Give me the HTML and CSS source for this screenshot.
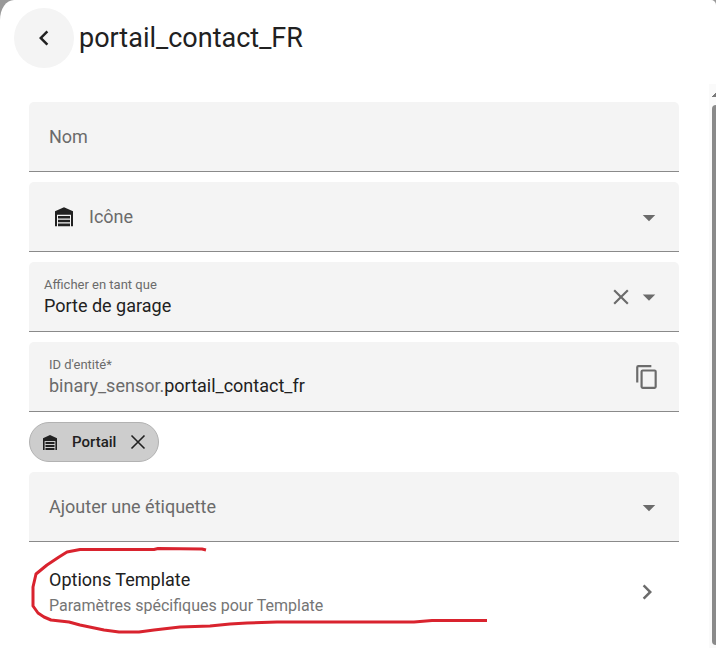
FILE: index.html
```html
<!DOCTYPE html>
<html lang="fr">
<head>
    <meta charset="UTF-8">
    <meta name="viewport" content="width=device-width, initial-scale=1.0">
    <title>portail_contact_FR</title>
    <link rel="stylesheet" href="styles.css">
</head>
<body>
    <div class="dialog">
        <header class="header">
            <button class="back" type="button" aria-label="Retour">
                <svg class="icon-l" viewBox="0 0 24 24"><path d="M15.41,16.58L10.83,12L15.41,7.41L14,6L8,12L14,18L15.41,16.58Z"/></svg>
            </button>
            <h1>portail_contact_FR</h1>
        </header>

        <div class="body">
            <form class="form">
                <div class="field">
                    <label class="label" for="name">Nom</label>
                    <input class="control" type="text" id="name">
                </div>

                <div class="field">
                    <svg class="icon-l dark" viewBox="0 0 24 24"><path d="M4.800,19.400V7.400L12,4.200L19.200,7.400V19.400H17.600V10.200H6.400V19.400ZM7.200,11.200H16.800V13.200H7.200ZM7.200,14.200H16.800V16.200H7.200ZM7.200,17.200H16.800V19.400H7.200Z"/></svg>
                    <label class="label" for="icon">Icône</label>
                    <select class="control" id="icon">
                        <option value=""></option>
                    </select>
                    <svg class="icon-l" viewBox="0 0 24 24"><path d="M7,10.400L12,15.400L17,10.400H7Z"/></svg>
                </div>

                <div class="field field-tight">
                    <div class="stack">
                        <label class="small-label" for="show-as">Afficher en tant que</label>
                        <select class="control" id="show-as">
                            <option selected>Porte de garage</option>
                        </select>
                    </div>
                    <button class="icon-btn" type="button" aria-label="Effacer">
                        <svg class="icon-m" viewBox="0 0 24 24"><path d="M19,6.41L17.59,5L12,10.59L6.41,5L5,6.41L10.59,12L5,17.59L6.41,19L12,13.41L17.59,19L19,17.59L13.41,12L19,6.41Z"/></svg>
                    </button>
                    <svg class="icon-l" viewBox="0 0 24 24"><path d="M7,10L12,15L17,10H7Z"/></svg>
                </div>

                <div class="field">
                    <div class="stack">
                        <label class="small-label" for="entity-id">ID d'entité*</label>
                        <div class="prefixed">
                            <span class="prefix">binary_sensor.</span>
                            <input class="control" type="text" id="entity-id" value="portail_contact_fr" required>
                        </div>
                    </div>
                    <button class="icon-btn copy" type="button" aria-label="Copier">
                        <svg class="icon-m" viewBox="0 0 24 24"><path d="M19,21H8V7H19M19,5H8A2,2 0 0,0 6,7V21A2,2 0 0,0 8,23H19A2,2 0 0,0 21,21V7A2,2 0 0,0 19,5M16,1H4A2,2 0 0,0 2,3V17H4V3H16V1Z"/></svg>
                    </button>
                </div>

                <div class="chip">
                    <svg class="icon-s" viewBox="0 0 24 24"><path d="M5,20V8.200L12,5L19,8.200V20H17.400V11H6.600V20ZM7.500,12H16.500V14H7.500ZM7.500,15H16.500V17H7.500ZM7.500,18H16.500V20H7.500Z"/></svg>
                    <span>Portail</span>
                    <button class="icon-btn dark" type="button" aria-label="Retirer Portail">
                        <svg class="icon-s" viewBox="0 0 24 24"><path d="M5.5,5.5L18.5,18.5M18.5,5.5L5.5,18.5" stroke="currentColor" stroke-width="1.6"/></svg>
                    </button>
                </div>

                <div class="field">
                    <label class="label" for="tag">Ajouter une étiquette</label>
                    <select class="control" id="tag">
                        <option value=""></option>
                    </select>
                    <svg class="icon-l" viewBox="0 0 24 24"><path d="M7,10.400L12,15.400L17,10.400H7Z"/></svg>
                </div>

                <a class="option" href="#">
                    <span class="option-text">
                        <span class="option-title">Options Template</span>
                        <span class="option-sub">Paramètres spécifiques pour Template</span>
                    </span>
                    <svg class="icon-l" viewBox="0 0 24 24"><path d="M8.59,16.58L13.17,12L8.59,7.41L10,6L16,12L10,18L8.59,16.58Z"/></svg>
                    <svg class="marker" viewBox="0 0 470 100"><path d="M177,8L173,7L129,6.500L125,7.500H51L38,10L30,15L18,23L7,32L4,45V64L9,71L15,75L22,78L40,80L51,83L75,88L90,90H110L125,88L151,85L181,84L201,82L218,81L248,80H385L403,78.500H458"/></svg>
                </a>
            </form>

            <div class="scrollbar">
                <div class="scroll-arrow"></div>
                <div class="scroll-thumb"></div>
            </div>
        </div>
    </div>
</body>
</html>
```
FILE: styles.css
```css
* {
    box-sizing: border-box;
}
body {
    margin: 0;
    background: #999;
    color: #212121;
    font-family: Roboto, sans-serif;
    font-size: 18px;
    line-height: 24px;
}
.dialog {
    display: flex;
    flex-direction: column;
    min-height: 100vh;
    background: #fff;
    border-radius: 14px 5px 0 0 / 20px 5px 0 0;
    overflow: hidden;
}
.header {
    display: flex;
    align-items: center;
    gap: 5px;
    padding: 8px 14px 16px;
}
h1 {
    margin: 0;
    font-size: 27px;
    line-height: 36px;
    font-weight: 400;
}
.back {
    display: flex;
    align-items: center;
    justify-content: center;
    width: 60px;
    height: 60px;
    padding: 0;
    border: none;
    border-radius: 50%;
    background: #f4f4f4;
    color: #212121;
    cursor: pointer;
}
svg {
    display: block;
    flex: none;
    fill: currentColor;
}
.icon-s {
    width: 24px;
    height: 24px;
}
.icon-m {
    width: 26px;
    height: 26px;
}
.icon-l {
    width: 30px;
    height: 30px;
}
.dark {
    color: #212121;
}
.body {
    display: flex;
    flex: 1;
}
.form {
    display: flex;
    flex: 1;
    flex-direction: column;
    gap: 10px;
    min-width: 0;
    padding: 18px 30px 0 29px;
}

/* fields */
.field {
    display: flex;
    align-items: center;
    gap: 10px;
    height: 70px;
    padding: 0 15px 0 20px;
    border-bottom: 1px solid #8a8a8a;
    border-radius: 5px 5px 0 0;
    background: #f4f4f4;
    color: #6b6b6b;
}
.field-tight {
    gap: 0;
    padding-left: 15px;
}
.stack {
    display: flex;
    flex: 1;
    flex-direction: column;
    min-width: 0;
}
.small-label {
    font-size: 13px;
    line-height: 18px;
}
.control {
    flex: 1;
    min-width: 0;
    height: 24px;
    padding: 0;
    border: none;
    outline: none;
    appearance: none;
    background: transparent;
    color: #212121;
    font: inherit;
}
.stack > .control {
    flex: none;
}
.prefixed {
    display: flex;
}
.icon-btn {
    display: flex;
    padding: 0;
    border: none;
    background: transparent;
    color: inherit;
    cursor: pointer;
}
.copy {
    padding: 0 4px;
}

.chip {
    display: flex;
    align-items: center;
    align-self: flex-start;
    gap: 10px;
    height: 40px;
    padding: 0 8px;
    border: 1px solid #b2b2b2;
    border-radius: 20px;
    background: #cdcdcd;
    font-size: 15px;
    font-weight: 500;
}

/* template options link */
.option {
    position: relative;
    display: flex;
    align-items: center;
    justify-content: space-between;
    padding: 16px 17px 16px 20px;
    color: #6b6b6b;
    text-decoration: none;
}
.option-text {
    display: flex;
    flex-direction: column;
    gap: 4px;
}
.option-title {
    color: #212121;
}
.option-sub {
    color: #757575;
    font-size: 16px;
    line-height: 20px;
}
.marker {
    position: absolute;
    top: -10px;
    left: 0;
    width: 470px;
    height: 100px;
    fill: none;
    stroke: #d9232e;
    stroke-width: 3;
    stroke-linejoin: round;
    pointer-events: none;
}

.scrollbar {
    display: flex;
    flex-direction: column;
    gap: 8px;
    width: 7px;
    padding: 8px 0 3px 3px;
    background: #fafafa;
}
.scroll-arrow {
    height: 5px;
    background: linear-gradient(135deg, transparent 50%, #7a7a7a 50%);
}
.scroll-thumb {
    flex: 1;
    border-radius: 4px 0 0 4px;
    background: #8a8a8a;
}
```
